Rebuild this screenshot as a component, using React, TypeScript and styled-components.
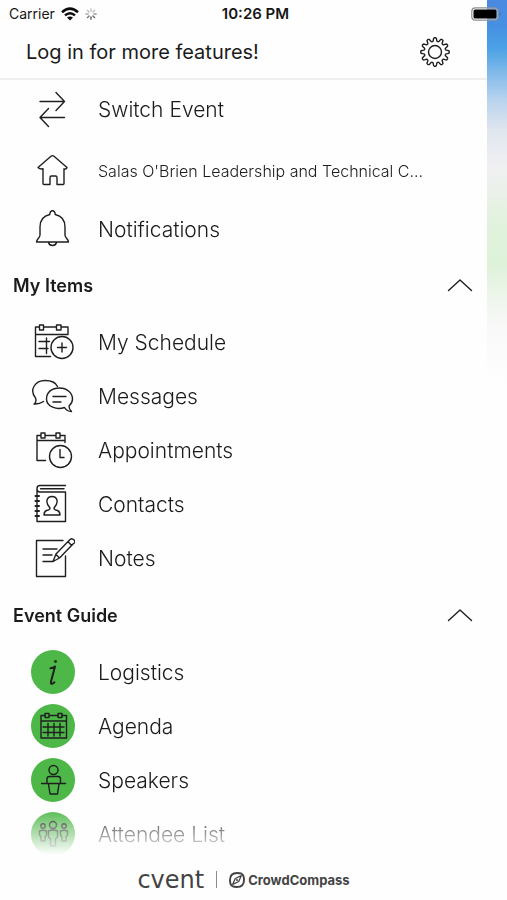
import React from "react";
import styled, { createGlobalStyle } from "styled-components";

const GlobalStyle = createGlobalStyle`
  *, *::before, *::after { box-sizing: border-box; }
  body {
    margin: 0;
    background: #fefefe;
    color: #1b1b1b;
    font-family: Inter, "Liberation Sans", sans-serif;
  }
  button { font: inherit; color: inherit; background: none; border: 0; padding: 0; cursor: pointer; }
`;

const Page = styled.div`
  position: relative;
  display: grid;
  grid-template-columns: minmax(0, 1fr) 20px;
  height: 100vh;
`;

const StatusBar = styled.div`
  position: absolute;
  inset: 0 0 auto;
  height: 27px;
  padding: 0 5px 0 9px;
  display: grid;
  grid-template-columns: 1fr auto 1fr;
  align-items: center;
  font-size: 14px;
  color: #161616;
`;

const Carrier = styled.div`
  display: flex;
  align-items: center;
  gap: 6px;
`;

const Clock = styled.time`
  font-size: 15px;
  font-weight: 600;
`;

const BatterySlot = styled.div`
  display: flex;
  justify-content: flex-end;
`;

const Drawer = styled.div`
  display: flex;
  flex-direction: column;
  min-height: 0;
  padding-top: 27px;
  background: #fefefe;
`;

const EventPreview = styled.div`
  background: linear-gradient(
    180deg,
    #4a89e0 0,
    #4690e2 25px,
    #4aa1e5 48px,
    #86bcea 75px,
    #b8d3ee 100px,
    #e0e6ef 130px,
    #f0f0f3 165px,
    #ebf1ea 190px,
    #e0f2dc 225px,
    #def2da 265px,
    #eff6ed 300px,
    #f9f9f9 330px,
    #fefefe 385px
  );
`;

const LoginBar = styled.header`
  display: flex;
  flex: none;
  align-items: center;
  justify-content: space-between;
  height: 53px;
  padding: 0 36px 2px 26px;
  border-bottom: 2px solid #efefef;
`;

const LoginButton = styled.button`
  font-size: 20px;
  line-height: 28px;
`;

const IconButton = styled.button`
  display: flex;
`;

const Menu = styled.nav`
  flex: 1;
  min-height: 0;
  overflow: hidden;
  mask-image: linear-gradient(180deg, #000 calc(100% - 54px), transparent calc(100% - 6px));
`;

const List = styled.ul`
  list-style: none;
  margin: 0;
  padding: 0;
`;

const Item = styled.a<{ $height?: number; $small?: boolean }>`
  display: grid;
  grid-template-columns: 44px minmax(0, 1fr);
  align-items: center;
  column-gap: 23px;
  height: ${(p) => p.$height ?? 54}px;
  padding: 0 50px 0 31px;
  color: inherit;
  text-decoration: none;
  font-size: ${(p) => (p.$small ? 16 : 21)}px;
  font-weight: 300;
`;

const Label = styled.span`
  overflow: hidden;
  white-space: nowrap;
  text-overflow: ellipsis;
`;

const SectionToggle = styled.button`
  display: flex;
  align-items: center;
  justify-content: space-between;
  width: 100%;
  height: 60px;
  padding: 0 14px 0 13px;
  font-size: 18px;
  font-weight: 600;
`;

const Badge = styled.span`
  display: flex;
  width: 44px;
  height: 44px;
  border-radius: 50%;
  background: #4db748;
`;

const Footer = styled.footer`
  display: flex;
  flex: none;
  align-items: center;
  justify-content: center;
  gap: 12px;
  height: 39px;
  padding-bottom: 2px;
  color: #434343;
`;

const Cvent = styled.span`
  font-family: "DejaVu Sans", sans-serif;
  font-size: 24px;
  line-height: 24px;
`;

const Divider = styled.span`
  width: 1px;
  height: 17px;
  background: #8c8c8c;
`;

const CrowdCompass = styled.span`
  display: flex;
  align-items: center;
  gap: 3px;
  font-size: 13px;
  font-weight: 700;
`;

const Line = styled.svg`
  display: block;
  flex: none;
  fill: none;
  stroke: #1f1f1f;
  stroke-width: 1.4;
  stroke-linejoin: round;
  stroke-linecap: round;
`;

const Icon = ({ children }: { children: React.ReactNode }) => (
  <Line width="44" height="44" viewBox="0 0 44 44" aria-hidden="true">
    {children}
  </Line>
);

const SwitchIcon = () => (
  <Icon>
    <path d="M9 13.500H33.500M25 4.500l8.500 9-8.500 9M33.500 29.500H9M17.500 20.500l-8.500 9 8.500 9" />
  </Icon>
);

const HomeIcon = () => (
  <Icon>
    <path d="M7 18.500 20 7.200q1.500-1.200 3 0L36 18.500q-.5 2-3 1.300V34.500q0 1-1 1h-6v-7q0-1.500-1.500-1.500h-4q-1.500 0-1.500 1.500v7h-6q-1 0-1-1V19.800q-3 .7-5-1.300z" />
  </Icon>
);

const BellIcon = () => (
  <Icon>
    <path d="M18.800 7.500C18.500 2.500 24.500 2.500 24.200 7.500C31 9 34 14 34 20V28C34 31 37.500 32 37.500 35H5.500C5.500 32 9 31 9 28V20C9 14 12 9 18.800 7.500zM17.500 35.500c1 4 7 4 8 0" />
  </Icon>
);

const ScheduleIcon = () => (
  <Icon>
    <path d="M8.500 7H4.500V36.500H19.500M12.500 7H25.500M30 7H37V14.500M4.500 14.500H37M8.500 5h4v5h-4zM25.500 5h4.500v5h-4.500zM8 21.500H18.500M8 28.500H17M15.500 18V33.500" />
    <circle cx="31" cy="27.500" r="11" />
    <path d="M26.500 27.500h9M31 23v9" />
  </Icon>
);

const MessagesIcon = () => (
  <Icon>
    <path d="M12.500 27.500Q8 30.500 3 30Q6 28 4.500 24C-2 16 4 6.500 14 6.500C20 6.500 25 9 26.500 12.500" />
    <path d="M33.500 33.500C26 36 15.500 33 15.500 25C15.500 18 21 14 28.500 14C36 14 41.500 19 41.500 25Q41.500 29 38 32Q38 35 40.500 37.500Q36 37.500 33.500 33.500zM22 22.500H35M22 28H30" />
  </Icon>
);

const AppointmentsIcon = () => (
  <Icon>
    <path d="M10 7.500H6V32.500H14.500M14.500 7.500H25M29 7.500H34V14.500M6 12.500H34M10 5h4v5h-4zM25 5h4v5h-4z" />
    <circle cx="29.500" cy="28.500" r="11" />
    <path d="M29 21.500V29.500H33" />
  </Icon>
);

const ContactsIcon = () => (
  <Icon>
    <path d="M34.500 3.500H9Q6 3.500 6 6.500V39.500H34.500V10H9Q6 10 6 6.500M9.500 6.700H33" />
    <path d="M4.500 14h3.500M4.500 19h3.500M4.500 24h3.500M4.500 29h3.500M4.500 34h3.500" strokeWidth="2" />
    <path d="M19 26C13.500 20 16 14.500 21 14.500S28.500 20 23 26Q23 28 26.500 28.500Q29 29.500 29 33H13Q13 29.500 15.500 28.500Q19 28 19 26z" />
  </Icon>
);

const NotesIcon = () => (
  <Icon>
    <path d="M32 4.500H5.500V40.500H34.500V20M12 13H26M12 19H21M12 25.500H22" />
    <path d="M22 25.500 25 18 39 3.500Q41 1.800 43 4T42.500 7.500L28.500 22zM37 5.500l3.500 4M25 18.500l3 3" />
  </Icon>
);

const InfoIcon = () => (
  <Icon>
    <path d="M19.500 18.300Q22.500 18 24 16.500L20 31.500Q19.300 34.500 21.800 33.500L23.500 32.300" strokeWidth="2" />
    <circle cx="24.500" cy="11.500" r="1.400" fill="#14300f" stroke="none" />
  </Icon>
);

const AgendaIcon = () => (
  <Icon>
    <path d="M14 11.500H10V34H35.500V11.500H31M18.500 11.500H27M10 17H35.500M12 23H33M12 28.500H33M17 19.500V32M23 19.500V32M29 19.500V32" />
    <path d="M14 9.500h4v4h-4zM27 9.500h4v4h-4z" />
  </Icon>
);

const SpeakersIcon = () => (
  <Icon>
    <circle cx="22.500" cy="12" r="4.500" />
    <path d="M16 25V21Q16 18.500 18.500 18.500H27Q29.500 18.500 29.500 21V25M10.500 25.500H34.500M17.500 26 19 36H26.500L28 26" />
  </Icon>
);

const AttendeesIcon = () => (
  <Icon>
    <circle cx="22" cy="13" r="3.500" />
    <circle cx="12" cy="14" r="2.200" />
    <circle cx="33" cy="14" r="2.200" />
    <path d="M17.500 19Q22 17 26.500 19V25L24.500 27V34H19.500V27L17.500 25zM8.500 19Q12 17.500 15.500 19V23L14 25V29H10V25L8.500 23zM29.500 19Q33 17.500 36.500 19V23L35 25V29H31V25L29.500 23z" />
  </Icon>
);

const gearOutline = (() => {
  const points: string[] = [];
  const steps = 144;
  for (let i = 0; i < steps; i++) {
    const a = (i / steps) * Math.PI * 2;
    const wave = Math.max(-1, Math.min(1, Math.cos(a * 12) * 1.7));
    const r = 12.5 + wave * 1.7;
    points.push(`${(16 + r * Math.sin(a)).toFixed(2)} ${(16 - r * Math.cos(a)).toFixed(2)}`);
  }
  return `M${points.join("L")}z`;
})();

const GearIcon = () => (
  <Line width="32" height="32" viewBox="0 0 32 32" aria-hidden="true">
    <path d={gearOutline} />
    <circle cx="16" cy="16" r="6.500" />
  </Line>
);

const ChevronUp = () => (
  <Line width="26" height="14" viewBox="0 0 26 14" aria-hidden="true">
    <path d="M1.500 12.500 13 2l11.500 10.500" />
  </Line>
);

const WifiIcon = () => (
  <svg width="18" height="14" viewBox="0 0 18 14" aria-hidden="true" fill="none" stroke="#0c0c0c" strokeWidth="2.500">
    <path d="M1 5.200Q9-2 17 5.200M4 8.400Q9 4 14 8.400" />
    <path d="M9 13.500 6 10.500Q9 8.300 12 10.500z" fill="#0c0c0c" stroke="none" />
  </svg>
);

const spokes = [0.4, 0.4, 0.6, 0.9, 1, 0.8, 0.5, 0.4];

const Spinner = () => (
  <svg width="12" height="12" viewBox="0 0 12 12" aria-hidden="true" stroke="#555" strokeWidth="1.300" strokeLinecap="round">
    {spokes.map((opacity, i) => (
      <path key={i} d="M6 3.200V.8" opacity={opacity} transform={`rotate(${i * 45} 6 6)`} />
    ))}
  </svg>
);

const Battery = () => (
  <svg width="31" height="14" viewBox="0 0 31 14" role="img" aria-label="Battery full">
    <rect x="0.800" y="0.800" width="26.400" height="12.400" rx="3.500" fill="#ffffff66" stroke="#8b8f94" strokeWidth="1.200" />
    <rect x="2.500" y="2.500" width="23" height="9" rx="1.500" fill="#000" />
    <path d="M28.700 5q2 2 0 4z" fill="#41699f" />
  </svg>
);

const CompassMark = () => (
  <svg width="16" height="16" viewBox="0 0 16 16" aria-hidden="true" fill="none" stroke="#434343">
    <path
      d="M3.500 14.200Q1 13 1 8Q1 1 8 1Q11 1 12.700 1.600M12.600 1.800Q15 3 15 8Q15 15 8 15Q5 15 3.300 14.200"
      strokeWidth="1.900"
    />
    <path d="M12.300 3.700 9.700 9.500 3.700 12.300 6.300 6.500z" strokeWidth="1.300" strokeLinejoin="round" />
    <circle cx="8" cy="8" r="1" fill="#434343" stroke="none" />
  </svg>
);

type Entry = { label: string; icon: () => React.ReactElement; height?: number; small?: boolean };

const general: Entry[] = [
  { label: "Switch Event", icon: SwitchIcon, height: 59 },
  { label: "Salas O'Brien Leadership and Technical C...", icon: HomeIcon, height: 64, small: true },
  { label: "Notifications", icon: BellIcon, height: 52 },
];

const myItems: Entry[] = [
  { label: "My Schedule", icon: ScheduleIcon },
  { label: "Messages", icon: MessagesIcon },
  { label: "Appointments", icon: AppointmentsIcon },
  { label: "Contacts", icon: ContactsIcon },
  { label: "Notes", icon: NotesIcon },
];

const eventGuide: Entry[] = [
  { label: "Logistics", icon: InfoIcon },
  { label: "Agenda", icon: AgendaIcon },
  { label: "Speakers", icon: SpeakersIcon },
  { label: "Attendee List", icon: AttendeesIcon },
];

const Entries = ({ items, badges }: { items: Entry[]; badges?: boolean }) => (
  <List>
    {items.map(({ label, icon: Glyph, height, small }) => (
      <li key={label}>
        <Item href="#" $height={height} $small={small}>
          {badges ? (
            <Badge>
              <Glyph />
            </Badge>
          ) : (
            <Glyph />
          )}
          <Label>{label}</Label>
        </Item>
      </li>
    ))}
  </List>
);

const Section = ({ title, items, badges }: { title: string; items: Entry[]; badges?: boolean }) => {
  const [open, setOpen] = React.useState(true);
  return (
    <section>
      <SectionToggle type="button" aria-expanded={open} onClick={() => setOpen(!open)}>
        {title}
        <ChevronUp />
      </SectionToggle>
      {open && <Entries items={items} badges={badges} />}
    </section>
  );
};

export default function App() {
  return (
    <>
      <GlobalStyle />
      <Page>
        <Drawer>
          <LoginBar>
            <LoginButton type="button">Log in for more features!</LoginButton>
            <IconButton type="button" aria-label="Settings">
              <GearIcon />
            </IconButton>
          </LoginBar>
          <Menu aria-label="Event menu">
            <Entries items={general} />
            <Section title="My Items" items={myItems} />
            <Section title="Event Guide" items={eventGuide} badges />
          </Menu>
          <Footer>
            <Cvent>cvent</Cvent>
            <Divider />
            <CrowdCompass>
              <CompassMark />
              CrowdCompass
            </CrowdCompass>
          </Footer>
        </Drawer>
        <EventPreview />
        <StatusBar>
          <Carrier>
            Carrier
            <WifiIcon />
            <Spinner />
          </Carrier>
          <Clock>10:26 PM</Clock>
          <BatterySlot>
            <Battery />
          </BatterySlot>
        </StatusBar>
      </Page>
    </>
  );
}
